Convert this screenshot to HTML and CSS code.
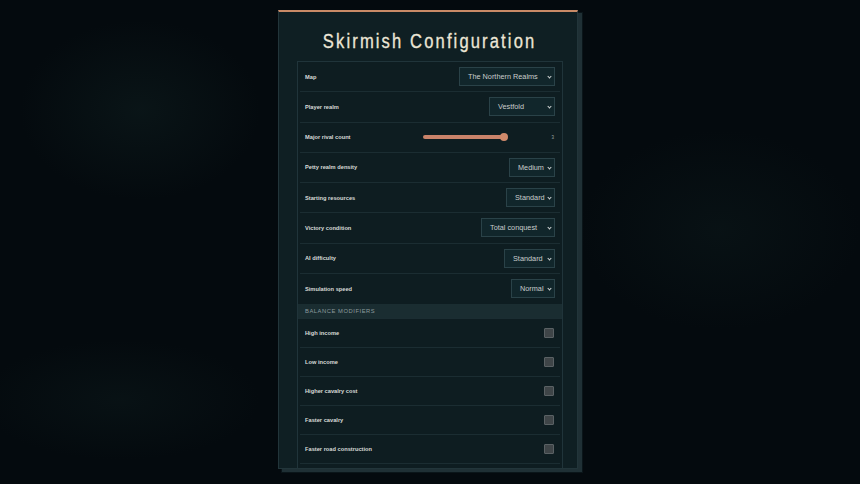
FILE: index.html
```html
<!DOCTYPE html>
<html lang="en">
<head>
<meta charset="utf-8">
<title>Skirmish Configuration</title>
<link rel="stylesheet" href="styles.css">
</head>
<body>
<main class="panel">
  <header class="title-bar"><h1 class="title">Skirmish Configuration</h1></header>
  <div class="table">
    <div class="row">
      <span class="label">Map</span>
      <div class="select w-map">The Northern Realms<span class="chev"></span></div>
    </div>
    <div class="row">
      <span class="label">Player realm</span>
      <div class="select w-player">Vestfold<span class="chev"></span></div>
    </div>
    <div class="row">
      <span class="label">Major rival count</span>
      <div class="slider-wrap">
        <div class="slider"><span class="thumb"></span></div>
        <span class="value">3</span>
      </div>
    </div>
    <div class="row">
      <span class="label">Petty realm density</span>
      <div class="select w-medium">Medium<span class="chev"></span></div>
    </div>
    <div class="row">
      <span class="label">Starting resources</span>
      <div class="select w-std1">Standard<span class="chev"></span></div>
    </div>
    <div class="row">
      <span class="label">Victory condition</span>
      <div class="select w-victory">Total conquest<span class="chev"></span></div>
    </div>
    <div class="row">
      <span class="label">AI difficulty</span>
      <div class="select w-std2">Standard<span class="chev"></span></div>
    </div>
    <div class="row last">
      <span class="label">Simulation speed</span>
      <div class="select w-normal">Normal<span class="chev"></span></div>
    </div>
    <div class="section">Balance modifiers</div>
    <div class="row check-row">
      <span class="label">High income</span>
      <span class="box"></span>
    </div>
    <div class="row check-row">
      <span class="label">Low income</span>
      <span class="box"></span>
    </div>
    <div class="row check-row">
      <span class="label">Higher cavalry cost</span>
      <span class="box"></span>
    </div>
    <div class="row check-row">
      <span class="label">Faster cavalry</span>
      <span class="box"></span>
    </div>
    <div class="row check-row">
      <span class="label">Faster road construction</span>
      <span class="box"></span>
    </div>
  </div>
</main>
</body>
</html>
```

FILE: styles.css
```css
* { box-sizing: border-box; }
html, body { margin: 0; padding: 0; }
body {
  width: 860px;
  height: 484px;
  overflow: hidden;
  font-family: "Liberation Sans", Arial, sans-serif;
  background-color: #040a0e;
  background-image:
    radial-gradient(ellipse 120px 90px at 140px 110px, rgba(20,40,40,0.35), transparent),
    radial-gradient(ellipse 140px 100px at 720px 230px, rgba(20,40,40,0.25), transparent),
    radial-gradient(ellipse 140px 60px at 120px 400px, rgba(20,40,40,0.25), transparent);
  display: flex;
  justify-content: center;
  align-items: flex-start;
  padding-top: 10px;
}
.panel {
  width: 300px;
  height: 459px;
  margin-left: -4px;
  background: #0f1f23;
  border: 1px solid #22353a;
  border-top: 2px solid #c98a66;
  box-shadow: 4px 3px 0 #1f3035, 4px 3px 0 1px #0a1519;
  padding: 0 14px 0 18px;
  overflow: hidden;
}
.title-bar {
  margin-top: 16px;
  height: 33px;
  display: flex;
  justify-content: center;
}
.title {
  margin: 0;
  display: inline-block;
  white-space: nowrap;
  font-size: 19.5px;
  font-weight: 400;
  letter-spacing: 2.5px;
  color: #ece6d6;
  line-height: 26px;
  transform: scaleX(0.85);
  -webkit-text-stroke: 0.3px #ece6d6;
}
.table {
  border: 1px solid #20343a;
  background: #0e1d21;
  min-height: 430px;
}
.row {
  display: flex;
  align-items: center;
  justify-content: space-between;
  height: 30.25px;
  margin: 0 2px;
  padding: 0 5px;
  border-bottom: 1px solid #1b2d32;
}
.row.last {
  border-bottom: 0;
}
.label {
  font-size: 5.7px;
  font-weight: 700;
  color: #d8dbd8;
}
.select {
  position: relative;
  height: 19px;
  display: flex;
  align-items: center;
  padding: 0 0 0 8px;
  background: #11262b;
  border: 1px solid #2a4248;
  color: #c9cdcc;
  font-size: 7.3px;
  white-space: nowrap;
}
.w-map { width: 96px; }
.w-player { width: 66px; }
.w-medium { width: 46px; }
.w-std1 { width: 49px; }
.w-victory { width: 74px; }
.w-std2 { width: 51px; }
.w-normal { width: 44px; }
.chev {
  position: absolute;
  right: 3px;
  top: 7px;
  width: 3px;
  height: 3px;
  border-right: 1px solid #d0d4d4;
  border-bottom: 1px solid #d0d4d4;
  transform: rotate(45deg);
}
.slider-wrap {
  display: flex;
  align-items: center;
  gap: 44px;
}
.slider {
  position: relative;
  width: 84px;
  height: 4px;
  border-radius: 2px;
  background: #c9836a;
}
.thumb {
  position: absolute;
  right: -1px;
  top: -2px;
  width: 8px;
  height: 8px;
  border-radius: 50%;
  background: #d08a6b;
}
.value {
  font-size: 4.5px;
  color: #9aa3a3;
  margin-right: 1px;
}
.section {
  height: 15px;
  display: flex;
  align-items: center;
  padding: 0 7px;
  background: #1a2d31;
  color: #8c9c9e;
  font-size: 5.8px;
  letter-spacing: 0.55px;
  text-transform: uppercase;
  border-bottom: 1px solid #1b2d32;
}
.check-row {
  height: 29px;
  padding-right: 6px;
}
.box {
  width: 10px;
  height: 10px;
  background: #3f4548;
  border: 1px solid #5a6164;
  border-radius: 1px;
}
```
